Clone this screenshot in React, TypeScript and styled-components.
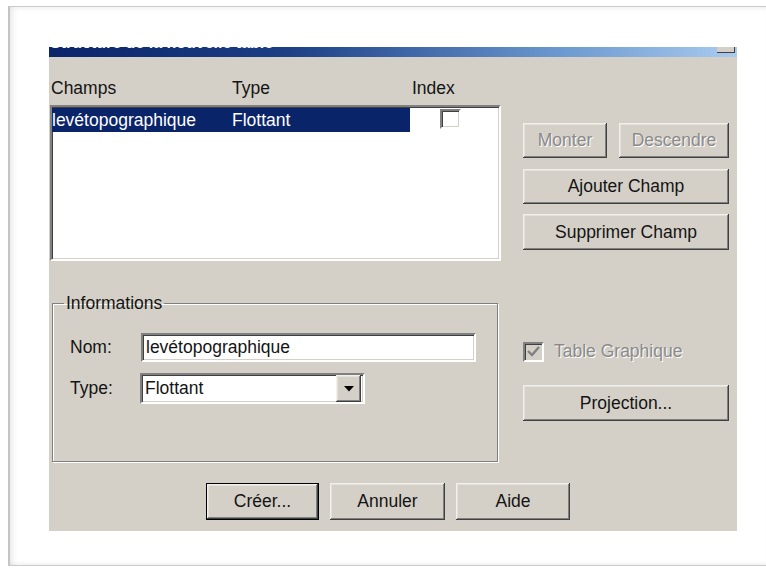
import React from "react";
import styled, { createGlobalStyle, css } from "styled-components";

const Global = createGlobalStyle`
  html, body { margin: 0; padding: 0; background: #fff; }
  body { font-family: "Liberation Sans", Arial, sans-serif; }
  * { box-sizing: border-box; }
`;

const Page = styled.div`
  width: 766px;
  height: 568px;
  overflow: hidden;
  background: #fff;
  padding: 6px 0 0 8px;
`;

const Frame = styled.div`
  height: 560px;
  border: 1px solid #cbcbcb;
  border-right: none;
  border-left: 2px solid #c4c4c4;
  box-shadow: inset 5px 3px 6px -3px rgba(0, 0, 0, 0.1), inset 0 -4px 4px -3px rgba(0, 0, 0, 0.08);
  padding: 40px 0 0 39px;
`;

const Dialog = styled.div`
  width: 688px;
  height: 484px;
  background: #d4d0c8;
  display: flex;
  flex-direction: column;
  color: #141414;
  font-size: 17.5px;
`;

const TitleBar = styled.div`
  height: 10px;
  flex: none;
  display: flex;
  justify-content: space-between;
  overflow: hidden;
  background: linear-gradient(to right, #0a246a 0%, #1c3f86 35%, #6d9ad0 75%, #a9cbef 100%);
`;

const TitleText = styled.span`
  color: #fff;
  font-weight: bold;
  font-size: 16px;
  line-height: 20px;
  margin-top: -14px;
  padding-left: 1px;
  white-space: nowrap;
`;

const CloseStub = styled.span`
  width: 18px;
  height: 6px;
  margin-right: 2px;
  background: #d4d0c8;
  border-right: 1px solid #404040;
  border-bottom: 1px solid #404040;
`;

const Main = styled.div`
  flex: 1;
  display: grid;
  grid-template-columns: 451px 207px;
  column-gap: 22px;
  padding-left: 1px;
`;

const LeftCol = styled.div`
  display: flex;
  flex-direction: column;
`;

const Header = styled.div`
  height: 48px;
  padding: 21px 0 0 1px;
  display: grid;
  grid-template-columns: 181px 180px 1fr;
  line-height: 20px;
`;

const sunken = css`
  border: 2px solid;
  border-color: #808080 #fff #fff #808080;
  box-shadow: inset 1px 1px #404040, inset -1px -1px #d4d0c8;
`;

const ListBox = styled.div`
  height: 156px;
  background: #fff;
  ${sunken};
  padding-top: 1px;
`;

const Row = styled.div`
  display: grid;
  grid-template-columns: 358px 1fr;
  height: 24px;
`;

const Selected = styled.div`
  display: grid;
  grid-template-columns: 180px 1fr;
  background: #0a246a;
  color: #fff;
  line-height: 24px;
`;

const IndexCell = styled.div`
  padding: 1px 0 0 30px;
`;

const Check = styled.span<{ $disabled?: boolean }>`
  display: flex;
  align-items: center;
  justify-content: center;
  width: 21px;
  height: 20px;
  background: ${(p) => (p.$disabled ? "#d4d0c8" : "#fff")};
  ${sunken};
`;

const Group = styled.fieldset`
  margin: 33px 0 0 2px;
  width: 446px;
  height: 168px;
  padding: 0;
  min-width: 0;
  border: 1px solid #808080;
  box-shadow: inset 1px 1px #fff, 1px 1px #fff;
`;

const Legend = styled.legend`
  margin-left: 11px;
  padding: 0 2px;
  line-height: 18px;
`;

const FormGrid = styled.div`
  display: grid;
  grid-template-columns: 71px auto;
  row-gap: 11px;
  align-items: center;
  justify-items: start;
  padding: 21px 0 0 17px;
`;

const TextField = styled.div`
  width: 335px;
  height: 29px;
  background: #fff;
  ${sunken};
  padding-left: 3px;
  line-height: 25px;
`;

const SelectField = styled.div`
  width: 225px;
  height: 31px;
  margin-left: -1px;
  background: #fff;
  ${sunken};
  display: flex;
  justify-content: space-between;
  padding: 0 2px 0 3px;
  line-height: 27px;
`;

const raised = css`
  background: #d4d0c8;
  box-shadow: inset -1px -1px #404040, inset 1px 1px #f2f0ec, inset -2px -2px #808080, inset 2px 2px #e4e1da;
`;

const DropButton = styled.span`
  width: 25px;
  height: 27px;
  ${raised};
  display: flex;
  align-items: center;
  justify-content: center;
`;

const RightCol = styled.div`
  display: flex;
  flex-direction: column;
  align-items: flex-start;
  padding-top: 66px;
`;

const Pair = styled.div`
  display: flex;
  gap: 12px;
`;

const Button = styled.button<{ $w: number; $h?: number; $top?: number; $default?: boolean }>`
  width: ${(p) => p.$w}px;
  height: ${(p) => p.$h ?? 35}px;
  margin-top: ${(p) => p.$top ?? 0}px;
  padding: 0;
  border: ${(p) => (p.$default ? "1px solid #000" : "none")};
  font-family: "Liberation Sans", Arial, sans-serif;
  font-size: 17.5px;
  color: #141414;
  white-space: nowrap;
  ${raised};
  &:disabled {
    color: #8a8a8a;
    text-shadow: 1px 1px #fff;
  }
`;

const CheckRow = styled.div`
  margin-top: 91px;
  display: flex;
  align-items: center;
  gap: 10px;
  color: #8a8a8a;
  text-shadow: 1px 1px #fff;
`;

const Footer = styled.div`
  display: flex;
  gap: 11px;
  padding: 0 0 11px 157px;
`;

export default function App() {
  return (
    <>
      <Global />
      <Page>
        <Frame>
          <Dialog>
            <TitleBar>
              <TitleText>Structure de la nouvelle table</TitleText>
              <CloseStub />
            </TitleBar>
            <Main>
              <LeftCol>
                <Header>
                  <span>Champs</span>
                  <span>Type</span>
                  <span>Index</span>
                </Header>
                <ListBox>
                  <Row>
                    <Selected>
                      <span>levétopographique</span>
                      <span>Flottant</span>
                    </Selected>
                    <IndexCell>
                      <Check />
                    </IndexCell>
                  </Row>
                </ListBox>
                <Group>
                  <Legend>Informations</Legend>
                  <FormGrid>
                    <span>Nom:</span>
                    <TextField>levétopographique</TextField>
                    <span>Type:</span>
                    <SelectField>
                      <span>Flottant</span>
                      <DropButton>
                        <svg width="10" height="6" viewBox="0 0 10 6">
                          <path d="M0 0h10L5 5.5z" fill="#000" />
                        </svg>
                      </DropButton>
                    </SelectField>
                  </FormGrid>
                </Group>
              </LeftCol>
              <RightCol>
                <Pair>
                  <Button $w={84} disabled>Monter</Button>
                  <Button $w={110} disabled>Descendre</Button>
                </Pair>
                <Button $w={206} $top={11}>Ajouter Champ</Button>
                <Button $w={206} $h={36} $top={10}>Supprimer Champ</Button>
                <CheckRow>
                  <Check $disabled>
                    <svg width="13" height="11" viewBox="0 0 13 11">
                      <path d="M1 5l4 4 7-8" fill="none" stroke="#808080" strokeWidth="2.4" />
                    </svg>
                  </Check>
                  <span>Table Graphique</span>
                </CheckRow>
                <Button $w={206} $h={36} $top={23}>Projection...</Button>
              </RightCol>
            </Main>
            <Footer>
              <Button $w={113} $h={37} $default>Créer...</Button>
              <Button $w={115} $h={37}>Annuler</Button>
              <Button $w={114} $h={37}>Aide</Button>
            </Footer>
          </Dialog>
        </Frame>
      </Page>
    </>
  );
}
